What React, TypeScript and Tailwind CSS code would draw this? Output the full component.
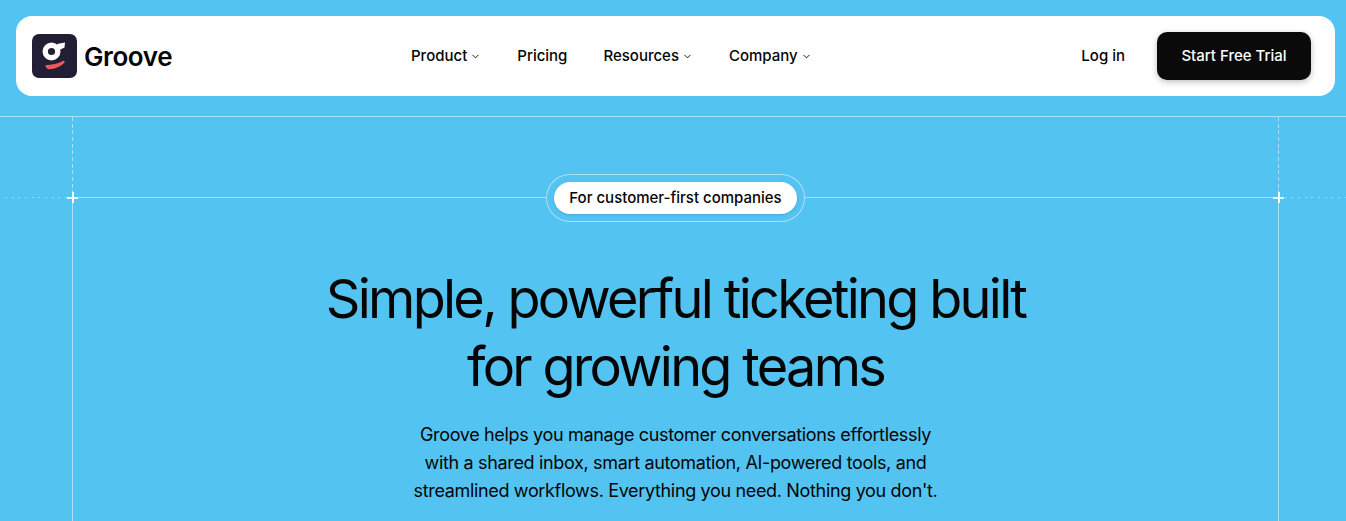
import { ChevronDown } from "lucide-react";

const navLinks = [
  { label: "Product", menu: true },
  { label: "Pricing", menu: false },
  { label: "Resources", menu: true },
  { label: "Company", menu: true },
];

function Logo() {
  return (
    <svg width="45" height="44" viewBox="0 0 45 44" className="block">
      <defs>
        <pattern id="dots" width="4" height="4" patternUnits="userSpaceOnUse">
          <circle cx="2" cy="2" r="0.6" fill="#16135a" />
        </pattern>
      </defs>
      <rect width="45" height="44" rx="7" fill="#221f33" />
      <rect width="45" height="44" rx="7" fill="url(#dots)" />
      <circle cx="19.5" cy="17.5" r="6.3" fill="none" stroke="#fff" strokeWidth="5.4" />
      <path d="M25 10 L33 8.5 L32.5 13.5 L27.5 16 Z" fill="#fff" />
      <path d="M13.5 31 C20 31 27 29.5 31.5 26.5 L33 28 C29 33 20 36 16 35 C14.5 34.5 13.5 33 13.5 31 Z" fill="#f0565a" />
    </svg>
  );
}

function Plus({ side }: { side: "left" | "right" }) {
  return (
    <div className={side === "left" ? "absolute -left-[6px] -top-[6px] size-[11px]" : "absolute -right-[6px] -top-[6px] size-[11px]"}>
      <div className="absolute left-0 top-[4.5px] h-[2px] w-full bg-white/90" />
      <div className="absolute left-[4.5px] top-0 h-full w-[2px] bg-white/90" />
    </div>
  );
}

export default function App() {
  return (
    <div className="h-[521px] overflow-hidden bg-[#53c3f1] font-['Inter',sans-serif] text-[#050505]">
      <div className="w-[1351px]">
        <header className="px-4 pb-5 pt-4">
          <nav className="relative flex h-20 items-center justify-between rounded-2xl bg-white pl-4 pr-6">
            <a className="flex items-center gap-[7px]">
              <Logo />
              <span className="pt-px text-[26px] font-semibold tracking-[-0.4px]">Groove</span>
            </a>
            <div className="absolute left-[395px] flex items-center gap-9 pt-px">
              {navLinks.map((link) => (
                <a key={link.label} className="flex items-center gap-[3px] text-[15px] font-medium">
                  {link.label}
                  {link.menu && <ChevronDown size={11} strokeWidth={2} />}
                </a>
              ))}
            </div>
            <div className="flex items-center gap-8">
              <a className="pt-px text-[15px] font-medium">Log in</a>
              <button className="h-12 w-[154px] rounded-[10px] bg-[#0a0a0a] pt-px text-[15px] font-medium text-white shadow-[0_2px_6px_rgba(0,0,0,0.25)]">
                Start Free Trial
              </button>
            </div>
          </nav>
        </header>

        <main className="border-t border-white/50">
          <div className="mx-[72px] flex h-20 justify-between">
            <div className="w-px bg-[repeating-linear-gradient(180deg,rgba(255,255,255,0.5)_0,rgba(255,255,255,0.5)_4px,transparent_4px,transparent_6.67px)]" />
            <div className="w-px bg-[repeating-linear-gradient(180deg,rgba(255,255,255,0.5)_0,rgba(255,255,255,0.5)_4px,transparent_4px,transparent_6.67px)]" />
          </div>
          <section className="relative mx-[72px] flex h-[400px] flex-col items-center border-x border-t border-white/50">
            <Plus side="left" />
            <Plus side="right" />
            <div className="absolute right-full top-[-1px] h-px w-[68px] bg-[repeating-linear-gradient(90deg,rgba(255,255,255,0.4)_0,rgba(255,255,255,0.4)_2px,transparent_2px,transparent_6.67px)]" />
            <div className="absolute left-full top-[-1px] h-px w-[68px] bg-[repeating-linear-gradient(90deg,rgba(255,255,255,0.4)_0,rgba(255,255,255,0.4)_2px,transparent_2px,transparent_6.67px)]" />
            <div className="-mt-6 rounded-full border border-white/50 bg-[#53c3f1] p-[7px]">
              <div className="flex h-8 w-[243px] items-center justify-center rounded-full bg-white text-[15px] font-medium shadow-sm">
                For customer-first companies
              </div>
            </div>
            <h1 className="mt-[43px] text-center text-[54px] font-normal leading-[68px] tracking-[-2.7px]">
              Simple, powerful ticketing built
              <br />
              for growing teams
            </h1>
            <p className="mt-5 text-center text-[18px] leading-7 tracking-[-0.34px]">
              Groove helps you manage customer conversations effortlessly
              <br />
              with a shared inbox, smart automation, AI-powered tools, and
              <br />
              streamlined workflows. Everything you need. Nothing you don't.
            </p>
          </section>
        </main>
      </div>
    </div>
  );
}
